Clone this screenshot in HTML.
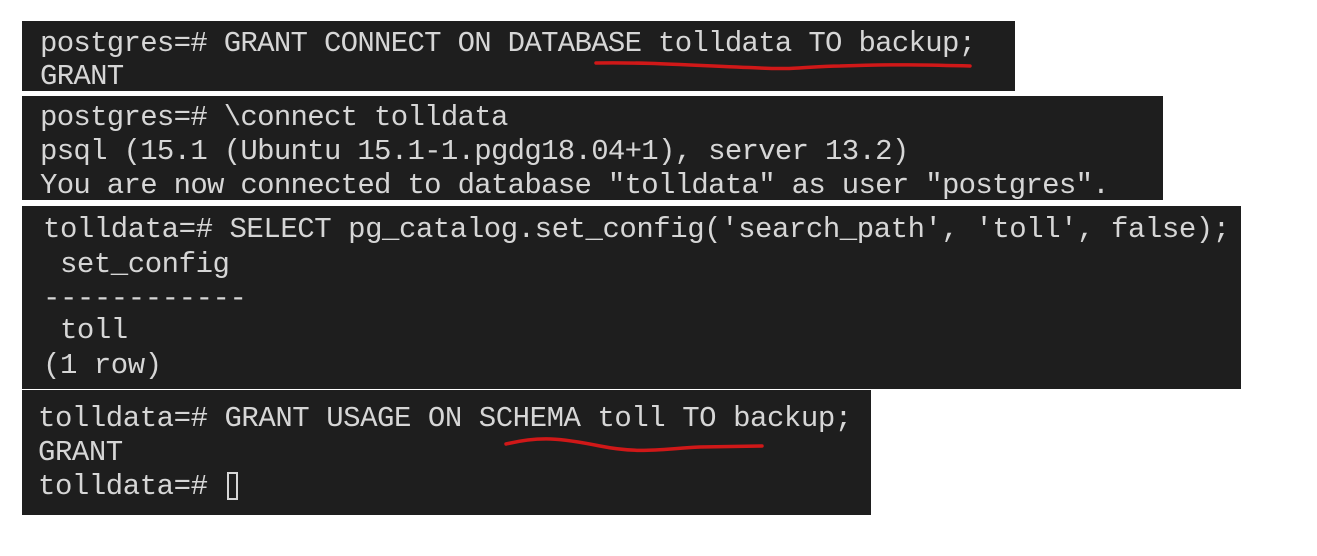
<!DOCTYPE html>
<html><head><style>
body{margin:0;width:1317px;height:556px;background:#fff;position:relative;overflow:hidden}
.p{position:absolute;background:#1e1e1e}
.t{position:absolute;font-family:"Liberation Mono",monospace;font-size:29px;letter-spacing:-0.7px;color:#d6d6d6;white-space:pre;line-height:30px}
.b{letter-spacing:-0.45px}
svg{position:absolute;left:0;top:0}
</style></head><body>
<div class="p" style="left:22px;top:21px;width:993px;height:70px"></div>
<div class="p" style="left:22px;top:96px;width:1141px;height:104px"></div>
<div class="p" style="left:22px;top:206px;width:1219px;height:183px"></div>
<div class="p" style="left:22px;top:390px;width:849px;height:125px"></div>

<div class="t" style="left:40px;top:29px">postgres=# GRANT CONNECT ON DATABASE tolldata TO backup;</div>
<div class="t" style="left:40px;top:62px">GRANT</div>

<div class="t" style="left:40px;top:103px">postgres=# \connect tolldata</div>
<div class="t" style="left:40px;top:137px">psql (15.1 (Ubuntu 15.1-1.pgdg18.04+1), server 13.2)</div>
<div class="t" style="left:40px;top:171px">You are now connected to database "tolldata" as user "postgres".</div>

<div class="t b" style="left:43px;top:215px">tolldata=# SELECT pg_catalog.set_config('search_path', 'toll', false);</div>
<div class="t b" style="left:43px;top:250px"> set_config</div>
<div class="t b" style="left:43px;top:284px">------------</div>
<div class="t b" style="left:43px;top:316px"> toll</div>
<div class="t b" style="left:43px;top:351px">(1 row)</div>

<div class="t b" style="left:38px;top:404px">tolldata=# GRANT USAGE ON SCHEMA toll TO backup;</div>
<div class="t b" style="left:38px;top:438px">GRANT</div>
<div class="t b" style="left:38px;top:472px">tolldata=# </div>
<div style="position:absolute;left:227px;top:472px;width:11px;height:28px;border:2px solid #d6d6d6;box-sizing:border-box"></div>

<svg width="1317" height="556">
<path d="M596 63 C650 62 700 66 760 68 C800 70 810 66 840 66 C900 64 930 65 970 66" stroke="#d01818" stroke-width="3.5" fill="none" stroke-linecap="round"/>
<path d="M506 444 C540 436 560 438 600 446 C640 454 660 449 700 447 L762 446" stroke="#d01818" stroke-width="3.5" fill="none" stroke-linecap="round"/>
</svg>
</body></html>
